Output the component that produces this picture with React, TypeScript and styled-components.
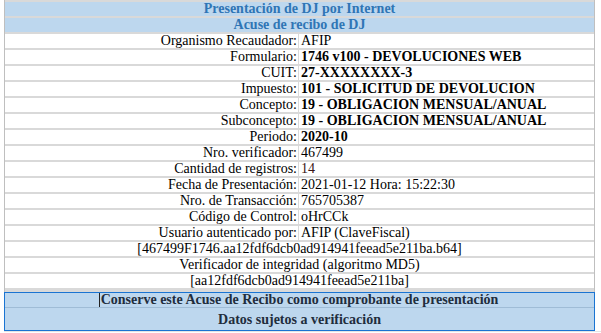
import styled, { createGlobalStyle } from 'styled-components';

const GlobalStyle = createGlobalStyle`
  html, body {
    margin: 0;
    padding: 0;
    background: #ffffff;
  }
  body {
    font-family: "Liberation Serif", "Times New Roman", serif;
    font-size: 14px;
    color: #000000;
  }
`;

type Field = { label: string; value: string; bold?: boolean; tone?: string };

const fields: Field[] = [
  { label: 'Organismo Recaudador:', value: 'AFIP' },
  { label: 'Formulario:', value: '1746 v100 - DEVOLUCIONES WEB', bold: true },
  { label: 'CUIT:', value: '27-XXXXXXXX-3', bold: true },
  { label: 'Impuesto:', value: '101 - SOLICITUD DE DEVOLUCION', bold: true },
  { label: 'Concepto:', value: '19 - OBLIGACION MENSUAL/ANUAL', bold: true },
  { label: 'Subconcepto:', value: '19 - OBLIGACION MENSUAL/ANUAL', bold: true },
  { label: 'Periodo:', value: '2020-10', bold: true },
  { label: 'Nro. verificador:', value: '467499' },
  { label: 'Cantidad de registros:', value: '14', tone: '#3a1414' },
  { label: 'Fecha de Presentación:', value: '2021-01-12 Hora: 15:22:30' },
  { label: 'Nro. de Transacción:', value: '765705387' },
  { label: 'Código de Control:', value: 'oHrCCk' },
  { label: 'Usuario autenticado por:', value: 'AFIP (ClaveFiscal)' },
];

export default function App() {
  return (
    <>
      <GlobalStyle />
      <Page>
        <Sheet>
          <Heading>Presentación de DJ por Internet</Heading>
          <Heading>Acuse de recibo de DJ</Heading>
          {fields.map((f) => (
            <Row key={f.label}>
              <Label>{f.label}</Label>
              <Value $bold={f.bold} $tone={f.tone}>
                {f.value}
              </Value>
            </Row>
          ))}
          <Wide>[467499F1746.aa12fdf6dcb0ad914941feead5e211ba.b64]</Wide>
          <Wide>Verificador de integridad (algoritmo MD5)</Wide>
          <Wide>[aa12fdf6dcb0ad914941feead5e211ba]</Wide>
        </Sheet>
        <Notice>
          <NoticeRow>
            <Caret />
            Conserve este Acuse de Recibo como comprobante de presentación
          </NoticeRow>
          <NoticeRow $tall>Datos sujetos a verificación</NoticeRow>
        </Notice>
        <Foot />
      </Page>
    </>
  );
}

const Page = styled.div`
  width: 601px;
  height: 333px;
  overflow: hidden;
  background: #ffffff;
  padding-left: 4px;
  box-sizing: border-box;
`;

const Sheet = styled.div`
  width: 591px;
  box-sizing: border-box;
  display: flex;
  flex-direction: column;
  gap: 2px;
  padding: 2px 0 4px;
  background: #d9d9d9;
  border-left: 1px solid #bfbfbf;
  border-right: 1px solid #bfbfbf;
`;

const Heading = styled.div`
  height: 14px;
  line-height: 14px;
  background: #bdd7ee;
  color: #2f75b5;
  font-weight: bold;
  text-align: center;
`;

const Row = styled.div`
  display: grid;
  grid-template-columns: 293px 1fr;
  column-gap: 1px;
  height: 14px;
  line-height: 14px;
`;

const Label = styled.div`
  background: #ffffff;
  text-align: right;
  padding-right: 1px;
  white-space: nowrap;
`;

const Value = styled.div<{ $bold?: boolean; $tone?: string }>`
  background: #ffffff;
  padding-left: 2px;
  white-space: nowrap;
  font-weight: ${(p) => (p.$bold ? 'bold' : 'normal')};
  color: ${(p) => p.$tone ?? '#000000'};
`;

const Wide = styled.div`
  height: 14px;
  line-height: 14px;
  background: #ffffff;
  text-align: center;
  white-space: nowrap;
`;

const Notice = styled.div`
  width: 591px;
  box-sizing: border-box;
  border: 1px solid #1a74d2;
  background: #9fbcd6;
  display: flex;
  flex-direction: column;
  gap: 1px;
`;

const NoticeRow = styled.div<{ $tall?: boolean }>`
  height: ${(p) => (p.$tall ? '22px' : '14px')};
  line-height: ${(p) => (p.$tall ? '23px' : '14px')};
  background: #bdd7ee;
  color: #1f2d3d;
  font-weight: bold;
  text-align: center;
  white-space: nowrap;
`;

const Caret = styled.span`
  display: inline-block;
  width: 0;
  height: 14px;
  margin-left: -2px;
  margin-right: 1px;
  border-left: 1px solid #222222;
  vertical-align: top;
`;

const Foot = styled.div`
  height: 1px;
  background: #e4e4e4;
`;
